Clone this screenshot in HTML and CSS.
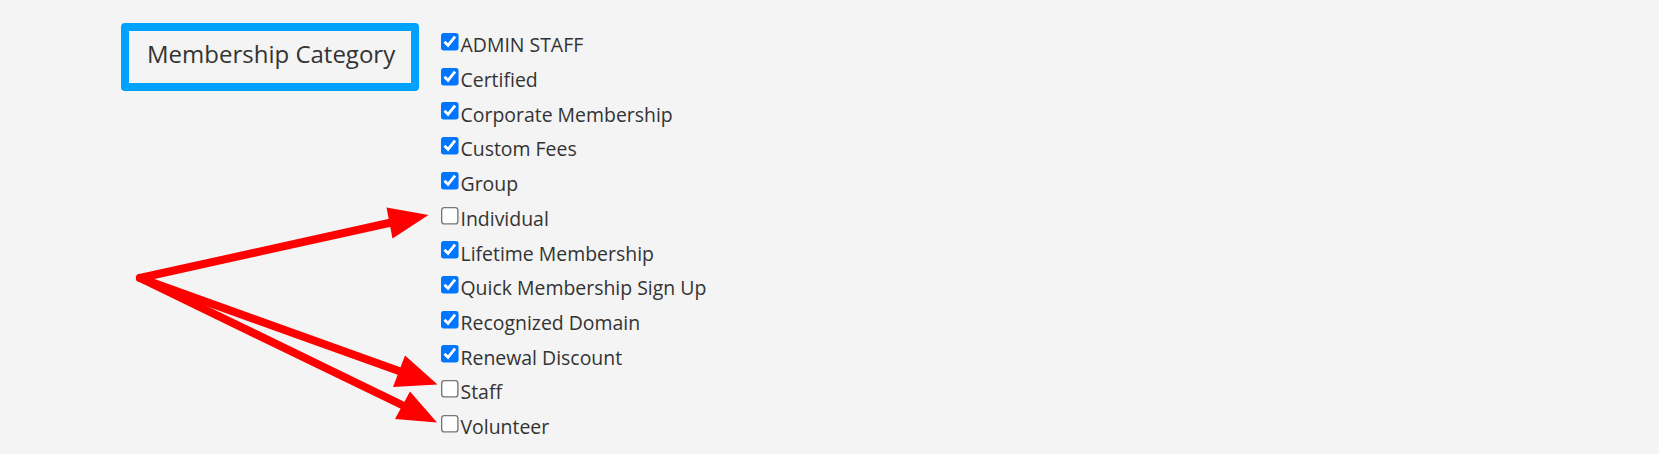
FILE: index.html
```html
<!DOCTYPE html>
<html>
<head>
<link rel="stylesheet" href="styles.css">
</head>
<body>

<div class="form-row">
  <div class="field-label">Membership Category</div>

  <ul class="category-list">
    <li><label><input type="checkbox" checked>ADMIN STAFF</label></li>
    <li><label><input type="checkbox" checked>Certified</label></li>
    <li><label><input type="checkbox" checked>Corporate Membership</label></li>
    <li><label><input type="checkbox" checked>Custom Fees</label></li>
    <li><label><input type="checkbox" checked>Group</label></li>
    <li><label><input type="checkbox">Individual</label></li>
    <li><label><input type="checkbox" checked>Lifetime Membership</label></li>
    <li><label><input type="checkbox" checked>Quick Membership Sign Up</label></li>
    <li><label><input type="checkbox" checked>Recognized Domain</label></li>
    <li><label><input type="checkbox" checked>Renewal Discount</label></li>
    <li><label><input type="checkbox">Staff</label></li>
    <li><label><input type="checkbox">Volunteer</label></li>
  </ul>
</div>

<!-- annotation arrows drawn over the form -->
<svg class="annotation" width="1659" height="454" viewBox="0 0 1659 454">
  <g stroke="#ff0000" stroke-width="8" stroke-linecap="round" stroke-linejoin="round" fill="none">
    <path d="M140 278 L389 223"/>
    <path d="M140 278 L399 371"/>
    <path d="M140 278 L402 405"/>
  </g>
  <g fill="#ff0000">
    <polygon points="386.5,207.5 428.5,215 392.5,238.5"/>
    <polygon points="405,355.5 437.5,384.5 393,387"/>
    <polygon points="410,391.5 437,422.5 395,419"/>
  </g>
</svg>

</body>
</html>
```

FILE: styles.css
```css
html, body {
  margin: 0;
  padding: 0;
  height: 454px;
  overflow: hidden;
}

body {
  background-color: #f4f4f4;
  font-family: "Open Sans", "Noto Sans", sans-serif;
  color: #333;
  position: relative;
}

.form-row {
  display: flex;
  align-items: flex-start;
  gap: 22px;
  padding: 23px 0 0 121px;
}

.field-label {
  box-sizing: border-box;
  width: 298px;
  height: 68px;
  border: 8px solid #00a2ff;
  border-radius: 4px;
  padding: 6px 0 0 18px;
  font-size: 24px;
  white-space: nowrap;
}

.category-list {
  list-style-type: none;
  margin: 5.2px 0 0 0;
  padding: 0;
}

.category-list li {
  height: 34.73px;
}

.category-list label {
  display: flex;
  align-items: flex-start;
  font-size: 19.45px;
  line-height: 34.73px;
  white-space: nowrap;
}

/* native checkbox drawn bigger; right margin leaves room for the scale */
.category-list input {
  flex: none;
  width: 13px;
  height: 13px;
  margin: 4.8px 6.5px 0 0;
  transform: scale(1.35);
  transform-origin: 0 0;
}

.annotation {
  position: absolute;
  top: 0;
  left: 0;
  pointer-events: none;
}
```
